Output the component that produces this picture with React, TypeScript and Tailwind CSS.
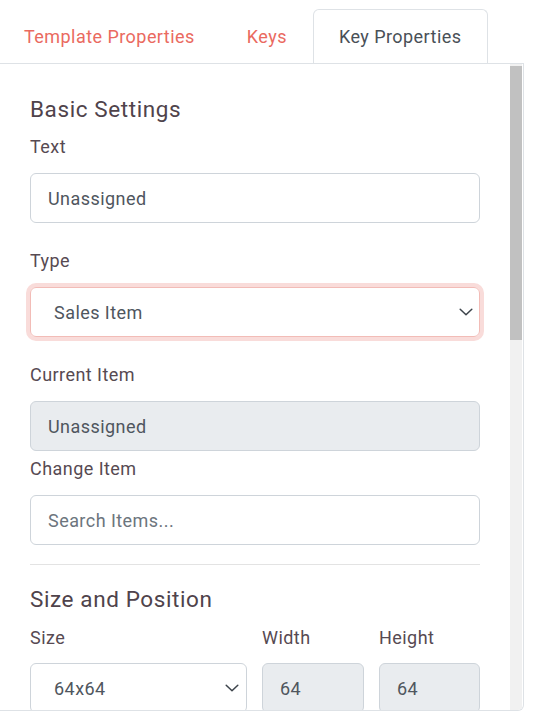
import React from "react";

const Chevron = () => (
  <svg width="14" height="8" viewBox="0 0 14 8" fill="none" className="shrink-0">
    <path d="M1.2 1.2l5.8 5.6 5.8-5.6" stroke="#3d444b" strokeWidth="1.5" strokeLinecap="round" strokeLinejoin="round" />
  </svg>
);

export default function App() {
  return (
    <div className="w-[538px] h-[712px] overflow-hidden bg-white font-['Roboto',sans-serif] text-[18px] leading-[27px] tracking-[0.45px]">
      {/* Tabs */}
      <div className="flex pt-[9px] h-[63px]">
        <div className="border border-transparent pl-[23px] pr-[25px] py-[13px] text-[#ea6a5f] whitespace-nowrap">
          Template Properties
        </div>
        <div className="border border-transparent px-[25px] py-[13px] text-[#ea6a5f] whitespace-nowrap">
          Keys
        </div>
        <div className="border border-b-0 border-[#dee2e6] rounded-t-[6px] px-[25px] py-[13px] text-[#495057] bg-white whitespace-nowrap">
          Key Properties
        </div>
      </div>

      {/* Panel */}
      <div className="flex w-[524px] h-[648px] border-t border-r border-b border-[#dee2e6] rounded-br-[6px] overflow-hidden">
        <div className="w-[510px] shrink-0 overflow-hidden px-[30px] pt-[32px] text-[#574a52]">
          <div className="text-[22.5px] leading-[27px] tracking-[0.6px] text-[#4f434b]">Basic Settings</div>

          <div className="mt-[10px]">Text</div>
          <div className="mt-[13px] h-[50px] flex items-center border border-[#ced4da] rounded-[6px] pl-[17px] text-[#4f565e]">
            Unassigned
          </div>

          <div className="mt-[24px]">Type</div>
          <div className="mt-[13px] h-[50px] flex items-center justify-between border border-[#f2bcb7] rounded-[6px] pl-[23px] pr-[6px] text-[#4f565e] shadow-[0_0_0_4px_#f9dcda]">
            <span>Sales Item</span>
            <Chevron />
          </div>

          <div className="mt-[24px]">Current Item</div>
          <div className="mt-[13px] h-[50px] flex items-center border border-[#ced4da] rounded-[6px] bg-[#e9ecef] pl-[17px] text-[#4f565e]">
            Unassigned
          </div>

          <div className="mt-[4px]">Change Item</div>
          <div className="mt-[13px] h-[50px] flex items-center border border-[#ced4da] rounded-[6px] pl-[17px] text-[#6c757d]">
            Search Items...
          </div>

          <div className="mt-[19px] h-px bg-[#e3e3e3]" />

          <div className="mt-[21px] text-[22.5px] leading-[27px] tracking-[0.6px] text-[#4f434b]">Size and Position</div>

          <div className="mt-[11px] grid grid-cols-[217px_102px_101px] gap-x-[15px]">
            <div>Size</div>
            <div>Width</div>
            <div>Height</div>
            <div className="mt-[12px] h-[50px] flex items-center justify-between border border-[#ced4da] rounded-[6px] pl-[23px] pr-[7px] text-[#4f565e]">
              <span>64x64</span>
              <Chevron />
            </div>
            <div className="mt-[12px] h-[50px] flex items-center border border-[#ced4da] rounded-[6px] bg-[#e9ecef] pl-[17px] text-[#4f565e]">
              64
            </div>
            <div className="mt-[12px] h-[50px] flex items-center border border-[#ced4da] rounded-[6px] bg-[#e9ecef] pl-[17px] text-[#4f565e]">
              64
            </div>
          </div>
        </div>

        {/* Scrollbar */}
        <div className="w-[12px] shrink-0 bg-[#f1f1f1] pt-[2px]">
          <div className="h-[274px] bg-[#c1c1c1]" />
        </div>
      </div>
    </div>
  );
}
